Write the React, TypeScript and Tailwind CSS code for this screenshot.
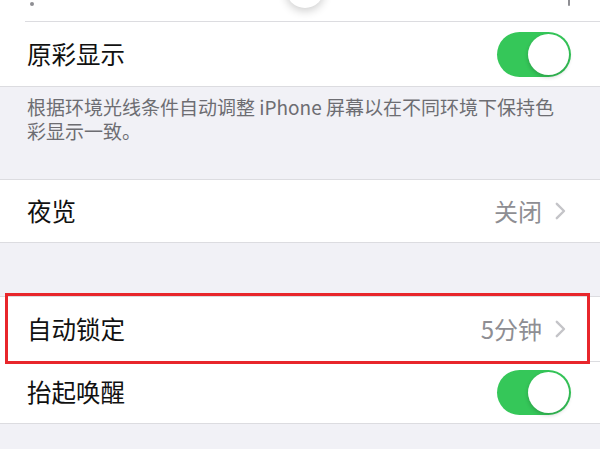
const font = {
  fontFamily: '"Noto Sans CJK SC", "Noto Sans", sans-serif',
};

const Chevron = () => (
  <svg width="11" height="18" viewBox="0 0 11 18" fill="none">
    <path
      d="M1.8 1.8 L9 9 L1.8 16.2"
      stroke="#c4c4c8"
      strokeWidth="2.4"
      strokeLinecap="round"
      strokeLinejoin="round"
    />
  </svg>
);

const Toggle = () => (
  <div className="flex h-[45px] w-[74px] items-center justify-end rounded-full bg-[#35c759] px-[2px]">
    <div className="h-[41px] w-[41px] rounded-full bg-white shadow-[0_2px_4px_rgba(0,0,0,0.2)]" />
  </div>
);

const Row = ({
  label,
  value,
  toggle,
}: {
  label: string;
  value?: string;
  toggle?: boolean;
}) =>
  toggle ? (
    <div className="flex h-full items-center justify-between pl-[27px] pr-[29px]">
      <span className="text-[24.5px] leading-none text-[#111]">{label}</span>
      <Toggle />
    </div>
  ) : (
    <div className="flex h-full items-center justify-between pl-[27px] pr-[34px]">
      <span className="text-[24.5px] leading-none text-[#111]">{label}</span>
      <div className="flex items-center gap-[13px] text-[#8e8e93]">
        <span className="text-[24px] leading-none">{value}</span>
        <Chevron />
      </div>
    </div>
  );

export default function App() {
  return (
    <div className="h-[449px] w-[600px] overflow-hidden bg-[#f1f1f6]" style={font}>
      {/* brightness slider, cut off at the top */}
      <div className="relative h-[22px] overflow-hidden bg-white">
        <div className="flex h-[21px] items-start justify-between px-[30px]">
          <div className="mt-[2px] h-[4px] w-[4px] rounded-full bg-[#8e8e93]" />
          <div className="-mt-[4px] flex flex-col items-center">
            <div className="h-[10px] w-[2px] rounded-full bg-[#8e8e93]" />
          </div>
        </div>
        <div className="absolute left-[286px] top-[-30px] h-[38px] w-[38px] rounded-full bg-white shadow-[0_3px_10px_rgba(0,0,0,0.2)]" />
        <div className="absolute bottom-0 left-[25px] right-0 h-px bg-[#dcdce0]" />
      </div>

      <div className="h-[65px] border-b border-[#dcdce0] bg-white">
        <Row label="原彩显示" toggle />
      </div>

      <div className="h-[92px] pl-[27px] pr-[40px] pt-[8px] text-[19px] leading-[24px] text-[#6d6d72]">
        根据环境光线条件自动调整 iPhone 屏幕以在不同环境下保持色彩显示一致。
      </div>

      <div className="h-[64px] border-y border-[#dcdce0] bg-white">
        <Row label="夜览" value="关闭" />
      </div>

      <div className="h-[53px]" />

      <div className="relative border-y border-[#dcdce0] bg-white">
        <div className="h-[64px]">
          <Row label="自动锁定" value="5分钟" />
        </div>
        <div className="ml-[27px] h-px bg-[#dcdce0]" />
        <div className="h-[61px]">
          <Row label="抬起唤醒" toggle />
        </div>
        <div className="absolute left-[5px] top-[-4px] h-[71px] w-[585px] border-[3px] border-[#e8262b]" />
      </div>
    </div>
  );
}
